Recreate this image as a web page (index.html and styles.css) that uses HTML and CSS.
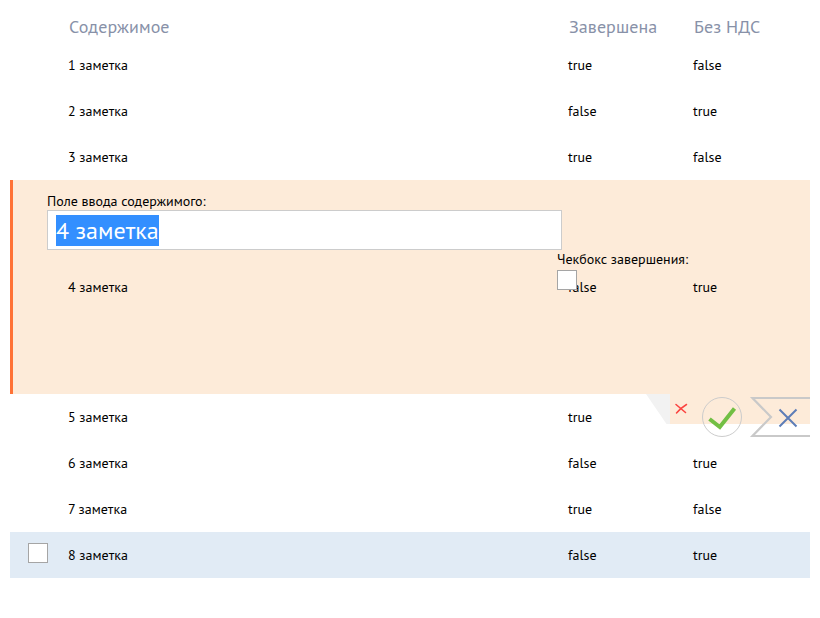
FILE: index.html
```html
<!DOCTYPE html>
<html lang="ru">
<head>
<meta charset="utf-8">
<title>Заметки</title>
<link rel="stylesheet" href="styles.css">
</head>
<body>
<main class="grid">
  <div class="row head"><span>Содержимое</span><span>Завершена</span><span>Без НДС</span></div>
  <div class="row"><span>1 заметка</span><span>true</span><span>false</span></div>
  <div class="row"><span>2 заметка</span><span>false</span><span>true</span></div>
  <div class="row"><span>3 заметка</span><span>true</span><span>false</span></div>
  <div class="row editing">
    <span>4 заметка</span><span>false</span><span>true</span>
    <label class="field content-field"><span class="caption">Поле ввода содержимого:</span>
      <span class="input"><span class="selected">4 заметка</span></span>
    </label>
    <label class="field done-field"><span class="caption">Чекбокс завершения:</span><span class="box"></span></label>
    <svg class="actions" width="164" height="46" viewBox="0 0 164 46">
      <path d="M0 0H24V30H20.500Z" fill="#f2f2f2"/>
      <path d="M24 0H164V30H24Z" fill="#fdebd9"/>
      <path d="M30 10.500L39.500 18.500" stroke="#fb4440" stroke-width="1.600" stroke-linecap="round"/>
      <path d="M30.500 19Q34 14.500 40.500 10.500" fill="none" stroke="#fb4440" stroke-width="1.500" stroke-linecap="round"/>
      <circle cx="76" cy="23" r="19.500" fill="none" stroke="#ccc"/>
      <path d="M63.500 25L73.800 33L88.500 14.500" fill="none" stroke="#72bf44" stroke-width="4"/>
      <path d="M164 4H106.500L125 23L106.500 42H164" fill="none" stroke="#c9c9c9" stroke-width="2.200"/>
      <path d="M133.500 15.500L150.500 32.500M150.500 15.500L133.500 32.500" stroke="#5d7db7" stroke-width="2"/>
    </svg>
  </div>
  <div class="row"><span>5 заметка</span><span>true</span><span></span></div>
  <div class="row"><span>6 заметка</span><span>false</span><span>true</span></div>
  <div class="row"><span>7 заметка</span><span>true</span><span>false</span></div>
  <div class="row hovered"><span>8 заметка</span><span>false</span><span>true</span><span class="box row-box"></span></div>
</main>
</body>
</html>
```
FILE: styles.css
```css
body {
  margin: 0;
  background: #fff;
  color: #000;
  font: 14px/18px "PT Sans", "Noto Sans", sans-serif;
}
.grid { padding: 12px 10px 0; }
.row {
  position: relative;
  display: grid;
  grid-template-columns: 500px 125px 117px;
  align-items: center;
  box-sizing: border-box;
  height: 46px;
  padding-left: 58px;
  white-space: nowrap;
}
.head {
  height: 30px;
  padding-left: 59px;
  color: #8891a8;
  font-size: 18px;
  letter-spacing: 0.08px;
}
.editing {
  height: 214px;
  padding-left: 55px;
  border-left: 3px solid #ff7236;
  background: #fdebd9;
}
.hovered { background: #e1ebf5; }
.field { position: absolute; }
.content-field { left: 34px; top: 12px; width: 515px; }
.done-field { left: 544px; top: 70px; }
.caption { display: block; }
.input {
  display: flex;
  align-items: center;
  box-sizing: border-box;
  height: 40px;
  padding-left: 8px;
  border: 1px solid #ccc;
  background: #fff;
}
.selected {
  background: #338fff;
  color: #fff;
  font-size: 24px;
  line-height: 31px;
}
.box {
  display: block;
  box-sizing: border-box;
  width: 20px;
  height: 20px;
  border: 1px solid #a5a5a5;
  background: #fff;
}
.done-field .box { margin-top: 2px; }
.row-box { position: absolute; left: 18px; top: 11px; }
.actions { position: absolute; right: 0; top: 214px; z-index: 1; }
```
